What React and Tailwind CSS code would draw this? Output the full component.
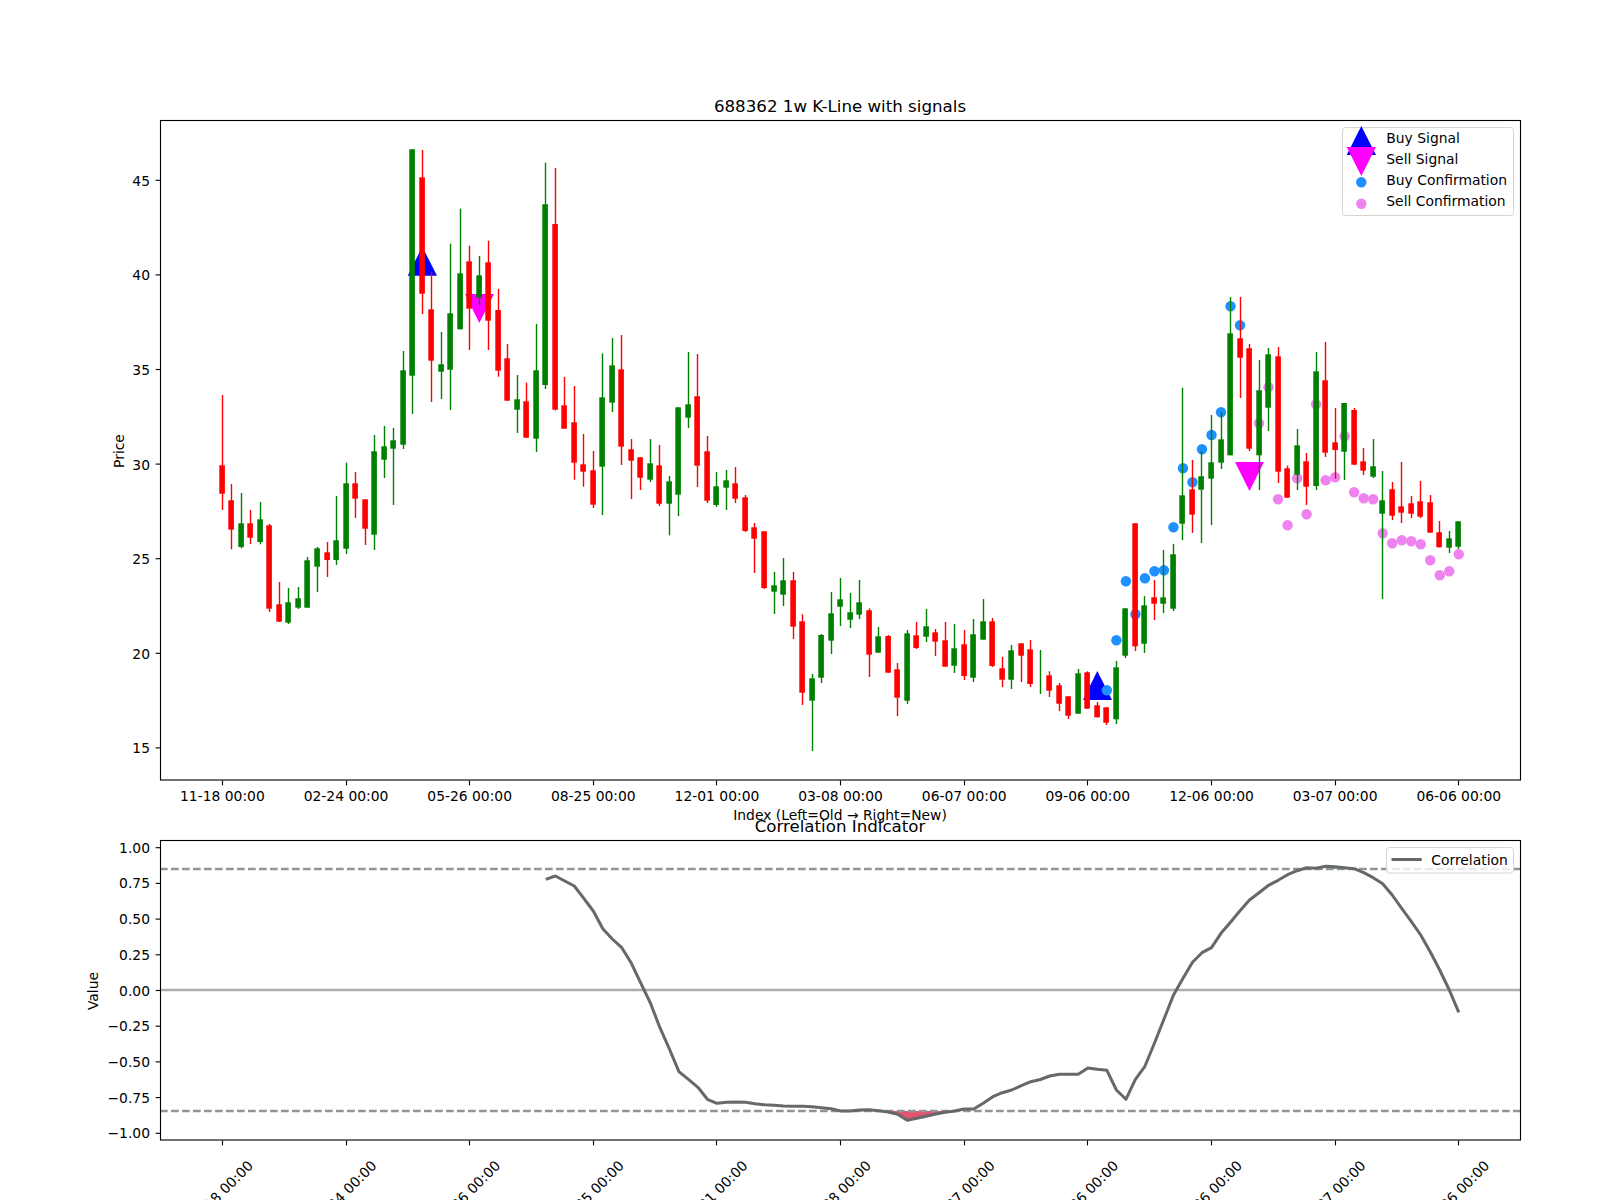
import React from 'react';

const FIRST_X = 222.4;
const STEP = 9.5105;
const xAt = (i) => FIRST_X + STEP * i;

// [colour, body top, body bottom, wick top, wick bottom] in chart pixels, oldest first
const CANDLES = [
  ['r', 465.3, 493.7, 395, 510], ['r', 500.3, 529.7, 484, 549.3], ['g', 523.3, 547, 493, 548.3], ['r', 523.3, 537.7, 510, 544],
  ['g', 519.3, 542, 502, 544.3], ['r', 525.3, 608.7, 524, 612], ['r', 604.3, 621.7, 582, 621.7], ['g', 602.3, 622.7, 588, 624],
  ['g', 598.3, 607.7, 587, 609], ['g', 560.3, 607.7, 557, 607.7], ['g', 548.3, 566.7, 547, 592], ['r', 552.3, 560, 542, 577],
  ['g', 540.3, 560, 496, 565], ['g', 483.3, 548.7, 462.7, 554], ['r', 483.3, 498.7, 472, 518], ['r', 499.3, 528.7, 499.3, 545],
  ['g', 451.3, 534.7, 435, 550], ['g', 446.3, 459.7, 426, 478], ['g', 440.3, 448.7, 428, 505], ['g', 370.3, 444.7, 351, 449],
  ['g', 149.3, 375.7, 149, 414], ['r', 177.3, 293.7, 150, 314], ['r', 309.3, 360.7, 271.7, 402], ['g', 364.3, 371.7, 332, 399],
  ['g', 313.3, 369.7, 243.7, 410], ['g', 273.3, 329.3, 208.7, 329.3], ['r', 261.3, 308.7, 245.7, 350], ['g', 275.3, 297.7, 256, 305],
  ['r', 262.3, 320.7, 240.7, 350], ['r', 310, 370.7, 289, 376.7], ['r', 358.3, 400.7, 344, 400.7], ['g', 399.3, 409.7, 375, 433],
  ['r', 401.3, 437.7, 382.7, 437.7], ['g', 370.3, 438.7, 324, 452], ['g', 204.3, 385, 162.7, 389], ['r', 224, 409.7, 168, 410.5],
  ['r', 405.3, 428.7, 377, 428.7], ['r', 422.3, 462.7, 386, 479.7], ['r', 464.3, 471.7, 434, 486.7], ['r', 470.3, 504.7, 451, 508],
  ['g', 397.3, 466.7, 353.3, 515], ['g', 365.3, 402.7, 338, 412], ['r', 369.3, 446.7, 335, 465], ['r', 449.3, 460.7, 439, 499],
  ['r', 457.3, 477.7, 457.3, 490], ['g', 463.3, 479.7, 439, 482], ['r', 465.3, 503.7, 445, 506], ['g', 481.3, 503.7, 476, 535.3],
  ['g', 407.3, 494.7, 407.3, 516], ['g', 404.3, 417.7, 352, 428], ['r', 396.3, 465.7, 354, 487], ['r', 451.3, 500.7, 436, 503],
  ['g', 486.3, 505, 472, 507], ['g', 480.3, 487.7, 470, 510], ['r', 483.3, 498.7, 467, 503], ['r', 497.3, 531, 495, 532],
  ['r', 527.3, 538.7, 523, 573], ['r', 531.3, 588, 531.3, 589], ['g', 585.3, 591.7, 572, 614], ['g', 580.3, 594.7, 558, 606],
  ['r', 580.3, 626.7, 572, 639], ['r', 621.3, 692.7, 614.3, 705], ['g', 678.3, 700.7, 674, 751], ['g', 635, 677.7, 634, 683],
  ['g', 613.3, 640.7, 592, 654], ['g', 599.3, 606.7, 578, 626], ['g', 612.3, 619.7, 593, 628], ['g', 602.3, 614.7, 580, 619],
  ['r', 610.3, 654.7, 608.3, 677], ['g', 636.3, 652.7, 627, 652.7], ['r', 636, 672.7, 635, 672.7], ['r', 669.3, 697.7, 663, 716],
  ['g', 633.3, 700.7, 630, 704], ['r', 635.3, 648, 622, 649], ['g', 626.3, 636.7, 609, 642], ['r', 632.3, 641.7, 629, 656],
  ['r', 640.3, 666.7, 622, 666.7], ['g', 648.3, 665.7, 624, 673], ['r', 644.3, 676, 630, 680], ['g', 634.3, 677.7, 619, 682],
  ['g', 621.3, 639.7, 599, 639.7], ['r', 621.3, 666, 618, 667], ['r', 668.3, 679.7, 657, 687], ['g', 650.3, 679.7, 645, 689],
  ['r', 643.3, 655.7, 643.3, 682], ['r', 649.3, 684, 640, 687], ['g', null, null, 650, 694], ['r', 675.3, 690.7, 671.3, 697],
  ['r', 685.3, 703.7, 683, 711], ['r', 696.3, 715.7, 696.3, 719], ['g', 673.3, 713.7, 669, 713.7], ['r', 672.3, 708.7, 671.3, 708.7],
  ['r', 705.3, 717.3, 702, 717.3], ['r', 707.3, 722.7, 707.3, 725], ['g', 667.3, 719.3, 661, 724], ['g', 608.3, 655.7, 608.3, 658],
  ['r', 523.3, 646.3, 523.3, 651], ['g', 605.3, 643.7, 596, 653], ['r', 597.3, 603.7, 580, 620], ['g', 597.3, 603.7, 550, 613],
  ['g', 554.3, 608.7, 544, 611], ['g', 495.3, 523.7, 387.7, 540], ['r', 489.3, 514.7, 460, 533], ['g', 476.3, 489.7, 451, 543],
  ['g', 462.3, 478.7, 415, 525], ['g', 439.3, 462.7, 412, 469], ['g', 333.3, 455.3, 297, 455.3], ['r', 338.3, 357.7, 297, 398],
  ['r', 348.3, 448.7, 344, 451], ['g', 390.3, 455.3, 360, 490], ['g', 354.3, 407.7, 348, 431], ['r', 356.3, 471.7, 347, 483],
  ['r', 468.3, 497.7, 465.7, 497.7], ['g', 445.3, 474.7, 429, 490], ['r', 461.3, 486.7, 453, 505], ['g', 371.3, 486, 352, 490],
  ['r', 380.3, 452.7, 342, 457], ['r', 442.3, 450, 408, 478.7], ['g', 403, 451.7, 403, 480], ['r', 410, 464.7, 408, 464.7],
  ['r', 461.3, 470.7, 448, 475], ['g', 466.3, 476.7, 439, 478], ['g', 500.3, 513.7, 471, 599], ['r', 489.3, 515.7, 482, 520],
  ['r', 506.3, 512.7, 462, 523], ['r', 503.3, 513.7, 496, 518], ['r', 501.3, 516.7, 481, 518], ['r', 502.3, 532.7, 495, 532.7],
  ['r', 532.3, 547.3, 521, 547.3], ['g', 538.3, 547.7, 531, 553], ['g', 521.3, 546.7, 521.3, 549],
];

// y of the dots, by candle index starting at BUY_FROM / SELL_FROM
const BUY_FROM = 93;
const BUY_DOTS = [690.3, 640.3, 581.3, 614.3, 578.3, 571.3, 570.3, 527.3, 468.3, 482.3, 449.3, 435, 412.3, 306.3, 325.3];
const SELL_FROM = 109;
const SELL_DOTS = [423.3, 387.3, 499.3, 525.3, 478.3, 514.3, 404.3, 480.3, 477.3, 436.3, 492.3, 498.3, 499.3, 533.3, 543.3, 540.3, 541.3, 544.3, 560.3, 575.3, 571.3, 554.3];

// correlation line, y in chart pixels, starts at candle 34
const CORR_FROM = 34;
const CORR = [
  879.3, 876, 881, 886, 898.3, 911, 928.7, 939, 947.7, 963.3, 983.3, 1003, 1027.7, 1049, 1071.7, 1079.3, 1087.3, 1099.3, 1103.3,
  1102.3, 1102, 1102.3, 1103.7, 1104.7, 1105.3, 1106, 1106.3, 1106.3, 1106.7, 1107.7, 1108.7, 1111, 1111, 1110, 1109.7, 1110.7,
  1112, 1114.3, 1120.3, 1118.3, 1116.3, 1114, 1112.3, 1111, 1109, 1109, 1103.3, 1096.7, 1092.7, 1090, 1085.7, 1081.7, 1079.5,
  1076, 1074.3, 1074.3, 1074.3, 1068, 1069.3, 1070.3, 1090, 1099.3, 1079.3, 1066.3, 1043.3, 1019.3, 995, 978.3, 962.3, 952.7,
  947.7, 933.3, 922.3, 910.7, 900, 892.7, 885.3, 880.3, 874.7, 870.7, 867.7, 868.3, 866.3, 866.7, 867.7, 868.7, 872.7, 877.7,
  883.7, 895, 908.3, 921.3, 935, 951.7, 970, 990, 1012.3,
];

const X_LABELS = ['11-18 00:00', '02-24 00:00', '05-26 00:00', '08-25 00:00', '12-01 00:00', '03-08 00:00', '06-07 00:00', '09-06 00:00', '12-06 00:00', '03-07 00:00', '06-06 00:00'];
const PRICE_TICKS = [45, 40, 35, 30, 25, 20, 15];
const VALUE_TICKS = ['1.00', '0.75', '0.50', '0.25', '0.00', '−0.25', '−0.50', '−0.75', '−1.00'];

const priceY = (p) => 653.3 - (p - 20) * 18.92;
const valueY = (i) => 847.7 + i * 35.7;

const Label = ({ className = 'text-[13.89px]', ...rest }) => (
  <text className={`font-['DejaVu_Sans',sans-serif] fill-black ${className}`} {...rest} />
);

const Candle = ({ c, i }) => {
  const [col, top, bottom, wickTop, wickBottom] = c;
  const x = Math.floor(xAt(i));
  const color = col === 'r' ? '#ff0000' : '#008000';
  return (
    <g fill={color}>
      <rect x={x - 0.2} y={wickTop} width={1.4} height={wickBottom - wickTop} />
      {top !== null && <rect x={x - 2.7} y={top} width={5.6} height={bottom - top} />}
    </g>
  );
};

const Frame = ({ top, bottom }) => (
  <rect x={160.5} y={top} width={1360} height={bottom - top} fill="none" stroke="#000" strokeWidth={1.11} />
);

const XTicks = ({ y }) =>
  X_LABELS.map((_, n) => {
    const x = Math.floor(xAt(n * 13)) + 0.5;
    return <line key={n} x1={x} x2={x} y1={y} y2={y + 4.9} stroke="#000" strokeWidth={1.11} />;
  });

export default function App() {
  const corrPoints = CORR.map((y, n) => `${xAt(CORR_FROM + n).toFixed(1)},${y}`).join(' ');

  return (
    <div className="w-[1600px] h-[1200px] bg-white overflow-hidden">
      <svg width="1600" height="1200" viewBox="0 0 1600 1200" className="block">
        {/* price panel */}
        <Label x={840} y={112} textAnchor="middle" className="text-[16.67px]">688362 1w K-Line with signals</Label>

        <polygon points="422.3,246.7 407.7,275.7 437,275.7" fill="#0000ff" />
        <polygon points="1097.3,671 1083,700 1112,700" fill="#0000ff" />
        <polygon points="465,294 494,294 479.3,323" fill="#ff00ff" />
        <polygon points="1235,462 1264,462 1249.5,491" fill="#ff00ff" />

        {BUY_DOTS.map((y, n) => (
          <circle key={n} cx={xAt(BUY_FROM + n)} cy={y} r={5.2} fill="#1e90ff" />
        ))}
        {SELL_DOTS.map((y, n) => (
          <circle key={n} cx={xAt(SELL_FROM + n)} cy={y} r={5.2} fill="#ee82ee" />
        ))}
        {CANDLES.map((c, i) => (
          <Candle key={i} c={c} i={i} />
        ))}

        <Frame top={120.5} bottom={780} />
        <XTicks y={780.5} />
        {X_LABELS.map((t, n) => (
          <Label key={t} x={xAt(n * 13)} y={801} textAnchor="middle">{t}</Label>
        ))}
        {PRICE_TICKS.map((p) => (
          <g key={p}>
            <line x1={155.6} x2={160} y1={priceY(p)} y2={priceY(p)} stroke="#000" strokeWidth={1.11} />
            <Label x={150} y={priceY(p) + 5.5} textAnchor="end">{p}</Label>
          </g>
        ))}
        <Label x={124} y={451} textAnchor="middle" transform="rotate(-90 124 451)">Price</Label>
        <Label x={840} y={820} textAnchor="middle">Index (Left=Old → Right=New)</Label>

        <rect x={1342.5} y={127.5} width={171} height={88} rx={3} fill="#fff" fillOpacity={0.8} stroke="#d5d5d5" strokeWidth={1} />
        <polygon points="1361.3,126 1346.7,155 1376,155" fill="#0000ff" />
        <polygon points="1346.7,147 1376,147 1361.3,176" fill="#ff00ff" />
        <circle cx={1361.3} cy={182.3} r={5.2} fill="#1e90ff" />
        <circle cx={1361.3} cy={203.7} r={5.2} fill="#ee82ee" />
        <Label x={1386.3} y={143}>Buy Signal</Label>
        <Label x={1386.3} y={164}>Sell Signal</Label>
        <Label x={1386.3} y={185}>Buy Confirmation</Label>
        <Label x={1386.3} y={206}>Sell Confirmation</Label>

        {/* correlation panel */}
        <Label x={840} y={832} textAnchor="middle" className="text-[16.67px]">Correlation Indicator</Label>

        <polygon points="888,1111 897,1114.3 907,1120.3 917,1118.3 926,1116.3 936,1114 945,1111" fill="#e5536f" />
        <polygon points="1325,869 1330,866.3 1337,866.6 1341,868 1341,869" fill="#4ccf4c" />
        <line x1={160} x2={1520} y1={869} y2={869} stroke="#949494" strokeWidth={2.4} strokeDasharray="7.7 3.3" />
        <line x1={160} x2={1520} y1={1111} y2={1111} stroke="#949494" strokeWidth={2.4} strokeDasharray="7.7 3.3" />
        <line x1={160} x2={1520} y1={990} y2={990} stroke="#adadad" strokeWidth={2.4} />
        <polyline points={corrPoints} fill="none" stroke="#686868" strokeWidth={3} strokeLinejoin="round" />

        <Frame top={840.5} bottom={1140} />
        <XTicks y={1140.5} />
        {VALUE_TICKS.map((t, n) => (
          <g key={t}>
            <line x1={155.6} x2={160} y1={valueY(n)} y2={valueY(n)} stroke="#000" strokeWidth={1.11} />
            <Label x={150} y={valueY(n) + 5} textAnchor="end">{t}</Label>
          </g>
        ))}
        <Label x={98} y={991} textAnchor="middle" transform="rotate(-90 98 991)">Value</Label>
        {X_LABELS.map((t, n) => {
          const x = xAt(n * 13) - 2;
          return (
            <Label key={t} x={x} y={1198} textAnchor="middle" transform={`rotate(-45 ${x} 1193)`}>{t}</Label>
          );
        })}

        <rect x={1386.5} y={847.5} width={127} height={25.5} rx={3} fill="#fff" fillOpacity={0.8} stroke="#d5d5d5" strokeWidth={1} />
        <line x1={1391.5} x2={1421.7} y1={859.5} y2={859.5} stroke="#686868" strokeWidth={3} />
        <Label x={1431.3} y={864.5}>Correlation</Label>
      </svg>
    </div>
  );
}
